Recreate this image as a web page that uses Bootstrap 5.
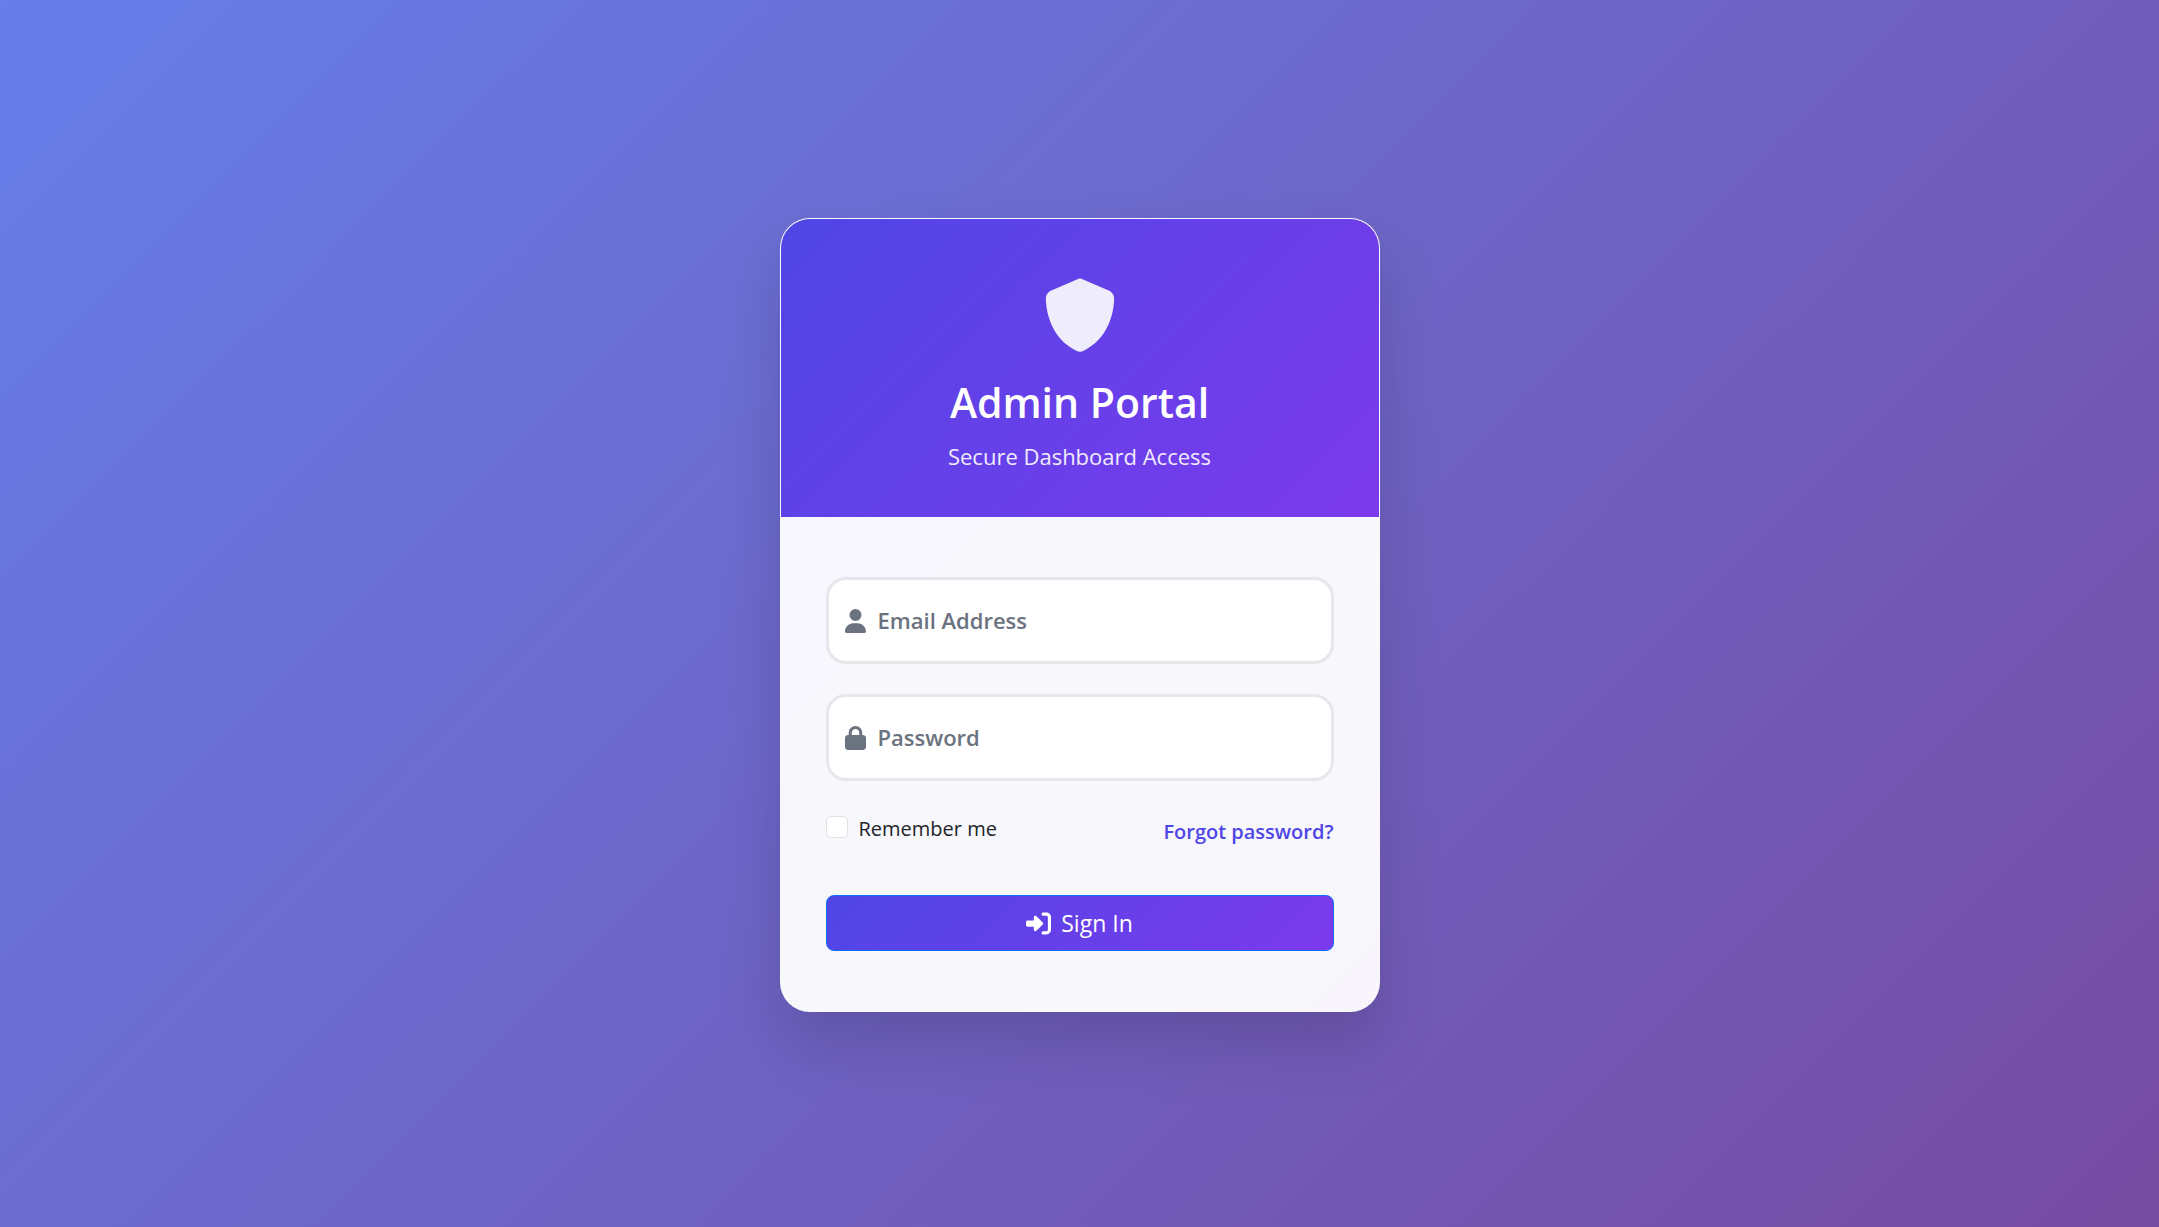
<!DOCTYPE html>
<html lang="en">
<head>
<meta charset="utf-8">
<meta name="viewport" content="width=device-width, initial-scale=1">
<title>Admin Portal</title>
<link href="https://cdn.jsdelivr.net/npm/bootstrap@5.3.0/dist/css/bootstrap.min.css" rel="stylesheet">
<style>
  html { font-size: 20px; }
  body {
    font-family: "Segoe UI", "Open Sans", "Noto Sans", sans-serif;
    background: linear-gradient(135deg, #667eea 0%, #764ba2 100%);
  }
  .login-page { padding-top: 3px; }
  .login-card {
    max-width: 600px;
    background: rgba(255, 255, 255, .95);
    border: 1px solid rgba(255, 255, 255, .2);
    border-radius: 30px;
    box-shadow: 0 31px 62px rgba(0, 0, 0, .15);
  }
  .login-header {
    padding: 56px 40px 44px;
    background: linear-gradient(135deg, #4f46e5 0%, #7c3aed 100%);
  }
  .shield { width: 80px; height: 80px; opacity: .9; }
  .login-title { font-size: 41px; line-height: 54px; font-weight: 600; }
  .login-sub { font-size: 22px; line-height: 34px; opacity: .9; }
  .login-body { padding: 60px 45px; }
  .field { margin-bottom: 30px; }
  .field > .form-control {
    height: 87px;
    border: 3px solid #e5e7eb;
    border-radius: 20px;
    background: #fff;
    font-size: 22px;
  }
  .field > label {
    padding: 0 18px;
    gap: 12px;
    color: #6b7280;
    font-size: 22px;
    font-weight: 600;
  }
  .field-icon { width: 21px; height: 24px; }
  .options { min-height: 41px; margin-bottom: 43px; }
  .remember { font-size: 20px; line-height: 30px; }
  .remember .form-check-input { width: 22px; height: 22px; margin-top: 2px; border-color: #dee2e6; }
  .remember .form-check-label { margin-left: 3px; }
  .forgot { color: #4f46e5; font-size: 20px; line-height: 30px; font-weight: 600; }
  .sign-in {
    height: 56px;
    padding: 0;
    font-size: 23px;
    border: 1px solid #0d6efd;
    border-radius: 8px;
    background: linear-gradient(135deg, #4f46e5 0%, #7c3aed 100%);
  }
  .sign-icon { width: 25px; height: 25px; }
</style>
</head>
<body>
<main class="login-page min-vh-100 d-flex align-items-center justify-content-center">
  <div class="login-card card w-100 overflow-hidden">
    <header class="login-header text-center text-white">
      <svg class="shield d-block mx-auto mb-3" viewBox="0 0 512 512" fill="currentColor" aria-hidden="true"><path d="M256 22c5 0 9 1 13 3l188 80c22 9 38 31 38 57-1 99-41 280-213 363-16 8-36 8-52 0C58 442 18 261 17 162c0-26 16-48 38-57l188-80c4-2 8-3 13-3z" transform="translate(22 2) scale(.914 .92)"/></svg>
      <h1 class="login-title mb-2">Admin Portal</h1>
      <p class="login-sub mb-0">Secure Dashboard Access</p>
    </header>
    <form class="login-body">
      <div class="field form-floating">
        <input type="email" class="form-control" id="email" placeholder="Email Address">
        <label for="email" class="d-flex align-items-center"><svg class="field-icon" viewBox="0 0 448 512" fill="currentColor" aria-hidden="true"><path d="M224 256A128 128 0 1 0 224 0a128 128 0 1 0 0 256zm-45.700 48C79.800 304 0 383.800 0 482.300 0 498.700 13.300 512 29.700 512h388.600c16.400 0 29.700-13.300 29.700-29.700 0-98.500-79.800-178.300-178.300-178.300h-91.400z"/></svg>Email Address</label>
      </div>
      <div class="field form-floating">
        <input type="password" class="form-control" id="password" placeholder="Password">
        <label for="password" class="d-flex align-items-center"><svg class="field-icon" viewBox="0 0 448 512" fill="currentColor" aria-hidden="true"><path d="M144 144v48h160v-48c0-44.200-35.800-80-80-80s-80 35.800-80 80zM80 192v-48C80 64.500 144.500 0 224 0s144 64.500 144 144v48h16c35.300 0 64 28.700 64 64v192c0 35.300-28.700 64-64 64H64c-35.300 0-64-28.700-64-64V256c0-35.300 28.700-64 64-64h16z"/></svg>Password</label>
      </div>
      <div class="options d-flex justify-content-between align-items-center">
        <div class="remember form-check mb-1">
          <input class="form-check-input" type="checkbox" id="remember">
          <label class="form-check-label" for="remember">Remember me</label>
        </div>
        <a href="#" class="forgot text-decoration-none">Forgot password?</a>
      </div>
      <button type="submit" class="sign-in btn btn-primary w-100 d-flex align-items-center justify-content-center gap-2">
        <svg class="sign-icon" viewBox="0 0 512 512" fill="currentColor" aria-hidden="true"><path d="M352 96h64c17.700 0 32 14.300 32 32v256c0 17.700-14.300 32-32 32h-64c-17.700 0-32 14.300-32 32s14.300 32 32 32h64c53 0 96-43 96-96V128c0-53-43-96-96-96h-64c-17.700 0-32 14.300-32 32s14.300 32 32 32zm-9.400 182.600c12.500-12.500 12.500-32.800 0-45.300l-128-128c-9.200-9.200-22.900-11.900-34.900-6.900S160 115.100 160 128v64H32c-17.700 0-32 14.300-32 32v64c0 17.700 14.300 32 32 32h128v64c0 12.900 7.800 24.600 19.800 29.600s25.700 2.200 34.900-6.900l128-128z"/></svg>
        Sign In
      </button>
    </form>
  </div>
</main>
<script src="https://cdn.jsdelivr.net/npm/bootstrap@5.3.0/dist/js/bootstrap.bundle.min.js"></script>
</body>
</html>
